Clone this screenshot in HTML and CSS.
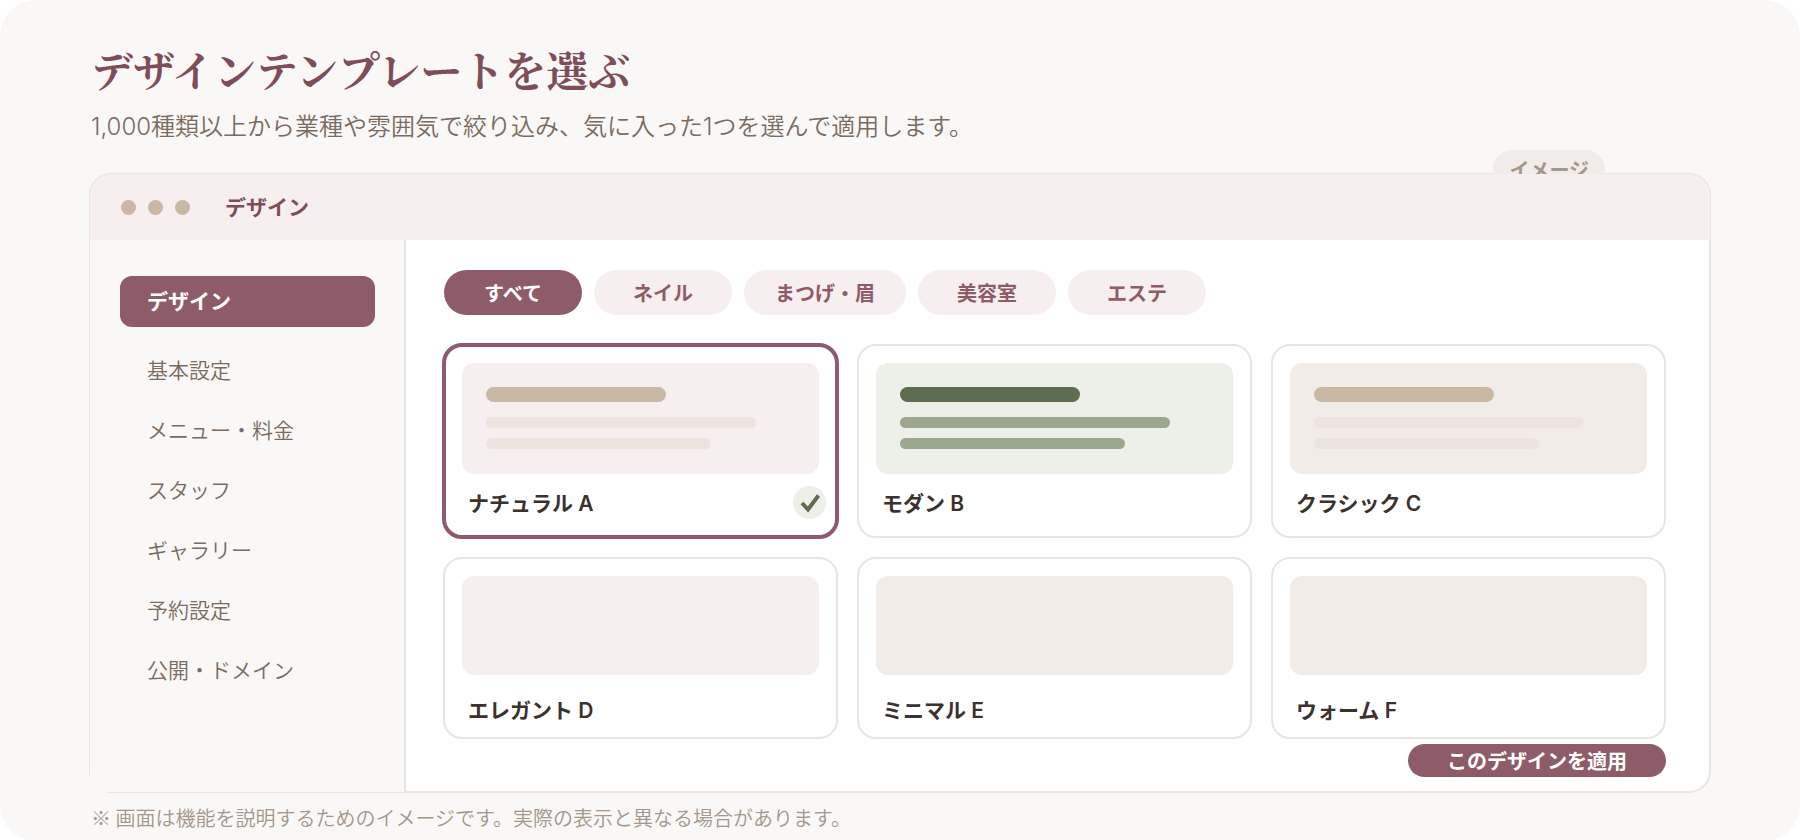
FILE: index.html
```html
<!DOCTYPE html>
<html lang="ja">
<head>
    <meta charset="UTF-8">
    <meta name="viewport" content="width=device-width, initial-scale=1.0">
    <title>デザインテンプレートを選ぶ</title>
    <link rel="stylesheet" href="styles.css">
</head>
<body>
    <div class="page">
        <h1>デザインテンプレートを選ぶ</h1>
        <p class="lead">1,000種類以上から業種や雰囲気で絞り込み、気に入った1つを選んで適用します。</p>

        <div class="window">
            <span class="badge">イメージ</span>
            <header class="window-bar">
                <span class="dots"><i></i><i></i><i></i></span>
                <span class="window-title">デザイン</span>
            </header>
            <div class="window-body">
                <nav class="sidebar">
                    <a href="#" class="active">デザイン</a>
                    <a href="#">基本設定</a>
                    <a href="#">メニュー・料金</a>
                    <a href="#">スタッフ</a>
                    <a href="#">ギャラリー</a>
                    <a href="#">予約設定</a>
                    <a href="#">公開・ドメイン</a>
                </nav>
                <main class="content">
                    <div class="filters">
                        <button type="button" class="active">すべて</button>
                        <button type="button">ネイル</button>
                        <button type="button">まつげ・眉</button>
                        <button type="button">美容室</button>
                        <button type="button">エステ</button>
                    </div>
                    <div class="templates">
                        <button type="button" class="card selected">
                            <span class="thumb pink">
                                <span class="line heading"></span>
                                <span class="line long"></span>
                                <span class="line short"></span>
                            </span>
                            <span class="name">ナチュラル A
                                <svg class="check" viewBox="0 0 33 33" aria-hidden="true">
                                    <circle cx="16.5" cy="16.5" r="16.5"/>
                                    <path d="M9 17 L15 23.5 L25.5 9.5"/>
                                </svg>
                            </span>
                        </button>
                        <button type="button" class="card">
                            <span class="thumb green">
                                <span class="line heading"></span>
                                <span class="line long"></span>
                                <span class="line short"></span>
                            </span>
                            <span class="name">モダン B</span>
                        </button>
                        <button type="button" class="card">
                            <span class="thumb beige">
                                <span class="line heading"></span>
                                <span class="line long"></span>
                                <span class="line short"></span>
                            </span>
                            <span class="name">クラシック C</span>
                        </button>
                        <button type="button" class="card compact">
                            <span class="thumb pink"></span>
                            <span class="name">エレガント D</span>
                        </button>
                        <button type="button" class="card compact">
                            <span class="thumb beige"></span>
                            <span class="name">ミニマル E</span>
                        </button>
                        <button type="button" class="card compact">
                            <span class="thumb beige"></span>
                            <span class="name">ウォーム F</span>
                        </button>
                    </div>
                    <button type="button" class="apply">このデザインを適用</button>
                </main>
            </div>
        </div>

        <p class="note">※ 画面は機能を説明するためのイメージです。実際の表示と異なる場合があります。</p>
    </div>
</body>
</html>
```
FILE: styles.css
```css
* {
    box-sizing: border-box;
}
body {
    margin: 0;
    background: #fff;
    font-family: "Noto Sans CJK JP", sans-serif;
    color: #3b322e;
}
button {
    border: none;
    background: none;
    padding: 0;
    font-family: inherit;
    color: inherit;
    cursor: pointer;
}
.page {
    min-height: 100vh;
    padding: 39px 89px 8px;
    background: #f9f8f6;
    border-radius: 36px;
}
h1 {
    margin: 0 0 10px;
    padding: 0 2px;
    font-family: "Noto Serif CJK JP", "Noto Sans CJK JP", serif;
    font-size: 42px;
    line-height: 60px;
    font-weight: 700;
    color: #7d4e5a;
}
.lead {
    margin: 0 0 28px;
    padding: 0 2px;
    font-family: Inter, "Noto Sans CJK JP", sans-serif;
    font-size: 24px;
    line-height: 36px;
    font-weight: 350;
    color: #7a6b60;
}

/* window */
.window {
    position: relative;
    background: #fff;
    border: 2px solid #ece4de;
    border-radius: 22px;
}
.badge {
    position: absolute;
    top: -25px;
    right: 104px;
    padding: 0 16px;
    border-radius: 20px;
    background: #f2ece8;
    color: #a3968b;
    font-size: 20px;
    line-height: 39px;
    font-weight: 600;
}
/* bar and sidebar cover the inner half of the window border */
.window-bar {
    position: relative;
    display: flex;
    align-items: center;
    gap: 35px;
    height: 66px;
    margin: -1px -1px 0;
    padding: 0 31px;
    border-radius: 21px 21px 0 0;
    background: #f7eeef;
}
.dots {
    display: flex;
    gap: 12px;
}
.dots i {
    width: 15px;
    height: 15px;
    border-radius: 50%;
    background: #cbb8a4;
}
.window-title {
    padding-bottom: 2px;
    font-size: 21px;
    font-weight: 600;
    color: #7d4e5a;
}
.window-body {
    display: flex;
}
.sidebar {
    display: flex;
    flex-direction: column;
    gap: 9px;
    flex: 0 0 316px;
    margin: 0 0 -1px -1px;
    padding: 36px 29px 36px 30px;
    background: #f9f8f6;
    border-right: 2px solid #ece4de;
}
.sidebar a {
    padding: 0 27px 2px;
    border-radius: 12px;
    font-size: 21px;
    line-height: 49px;
    font-weight: 350;
    color: #7a6b60;
    text-decoration: none;
}
.sidebar a.active {
    margin-bottom: 9px;
    background: #8e5c68;
    color: #fff;
    font-weight: 600;
}
.content {
    flex: 1;
    display: flex;
    flex-direction: column;
    padding: 30px 43px 14px 37px;
}

/* filters */
.filters {
    display: flex;
    gap: 12px;
    margin-bottom: 29px;
    padding-left: 1px;
}
.filters button {
    min-width: 138px;
    padding: 0 31px;
    border-radius: 23px;
    background: #f7eeef;
    color: #8e5c68;
    font-size: 20px;
    line-height: 45px;
    font-weight: 600;
}
.filters button.active {
    background: #8e5c68;
    color: #fff;
}

/* templates */
.templates {
    display: grid;
    grid-template-columns: repeat(3, 1fr);
    gap: 19px;
}
.card {
    display: flex;
    flex-direction: column;
    border: 2px solid #ece4de;
    border-radius: 19px;
    background: #fff;
    text-align: left;
}
.thumb {
    display: flex;
    flex-direction: column;
    align-self: stretch;
    height: 111px;
    margin: 17px 17px 0;
    padding: 24px 24px 0;
    border-radius: 12px;
}
.thumb.pink {
    background: #f7eeef;
}
.thumb.green {
    background: #edf0e9;
}
.thumb.beige {
    background: #f2ece8;
}
.line {
    flex-shrink: 0;
    height: 11px;
    margin-bottom: 10px;
    border-radius: 6px;
    background: #ede4df;
}
.line.heading {
    width: 180px;
    height: 15px;
    margin-bottom: 15px;
    border-radius: 8px;
    background: #cbb8a4;
}
.line.long {
    width: 270px;
}
.line.short {
    width: 225px;
}
.green .line {
    background: #9ba88e;
}
.green .line.heading {
    background: #5e6d4f;
}
.name {
    display: flex;
    align-items: center;
    justify-content: space-between;
    align-self: stretch;
    height: 56px;
    margin-bottom: 6px;
    padding: 0 10px 0 23px;
    font-family: Inter, "Noto Sans CJK JP", sans-serif;
    font-size: 21px;
    font-weight: 600;
}
/* thicker border grows 1px out and 1px in */
.card.selected {
    margin: -1px;
    border: 4px solid #8e5c68;
    border-radius: 20px;
}
.selected .thumb {
    margin: 16px 16px 0;
}
.selected .name {
    margin-bottom: 5px;
    padding: 0 9px 0 22px;
}
.check {
    width: 33px;
    height: 33px;
}
.check circle {
    fill: #edf0e9;
}
.check path {
    fill: none;
    stroke: #5e6d4f;
    stroke-width: 4;
}
.compact .thumb {
    height: 99px;
}
.compact .name {
    margin: 6px 0 0;
}
.apply {
    align-self: flex-end;
    margin-top: 5px;
    padding: 0 39px;
    border-radius: 17px;
    background: #8e5c68;
    color: #fff;
    font-size: 20px;
    line-height: 33px;
    font-weight: 600;
}
.note {
    margin: 10px 0 0;
    padding: 0 2px;
    font-size: 20px;
    line-height: 30px;
    font-weight: 350;
    color: #a3968b;
}
```
